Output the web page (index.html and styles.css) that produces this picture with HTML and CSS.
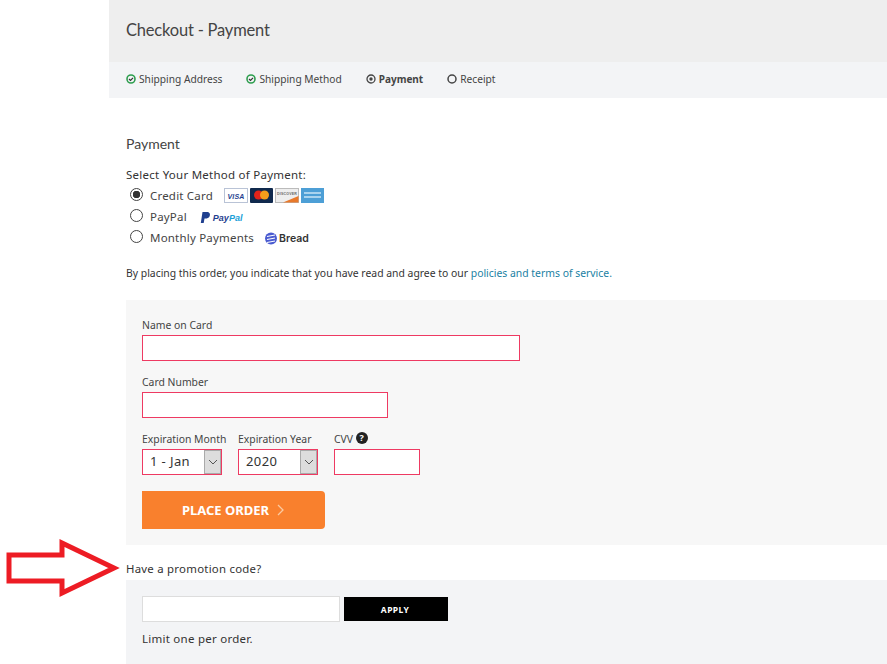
FILE: index.html
```html
<!DOCTYPE html>
<html lang="en">
<head>
  <meta charset="UTF-8" />
  <title>Checkout - Payment</title>
  <link rel="stylesheet" href="styles.css">
</head>
<body>
  <svg class="callout-arrow" width="122" height="60" viewBox="0 0 122 60">
    <path d="M9 17H62V5L114 30L62 55V43H9Z" fill="none" stroke="#ed1c24" stroke-width="5" stroke-linejoin="miter"/>
  </svg>

  <div class="page">
    <div class="header"><h1>Checkout - Payment</h1></div>

    <div class="steps">
      <div class="step step-done">
        <svg width="10" height="10" viewBox="0 0 10 10"><circle cx="5" cy="5" r="4" fill="none" stroke="#2e9e4f" stroke-width="1.600"/><path d="M3 5l1.500 1.500L7 3.800" fill="none" stroke="#333" stroke-width="1.200"/></svg>
        Shipping Address
      </div>
      <div class="step step-done">
        <svg width="10" height="10" viewBox="0 0 10 10"><circle cx="5" cy="5" r="4" fill="none" stroke="#2e9e4f" stroke-width="1.600"/><path d="M3 5l1.500 1.500L7 3.800" fill="none" stroke="#333" stroke-width="1.200"/></svg>
        Shipping Method
      </div>
      <div class="step step-current">
        <svg width="10" height="10" viewBox="0 0 10 10"><circle cx="5" cy="5" r="4" fill="none" stroke="#444" stroke-width="1.300"/><circle cx="5" cy="5" r="1.700" fill="#444"/></svg>
        Payment
      </div>
      <div class="step">
        <svg width="10" height="10" viewBox="0 0 10 10"><circle cx="5" cy="5" r="4" fill="none" stroke="#444" stroke-width="1.500"/></svg>
        Receipt
      </div>
    </div>

    <div class="content">
      <h2>Payment</h2>
      <div class="method-title">Select Your Method of Payment:</div>

      <div class="methods">
        <div class="method">
          <span class="radio radio-on"></span>
          <span class="method-name">Credit Card</span>
          <span class="cards">
            <svg width="24" height="15" viewBox="0 0 24 15"><rect x=".5" y=".5" width="23" height="14" fill="#fff" stroke="#b9c3d6"/><text x="12" y="11" class="visa">VISA</text></svg>
            <svg width="23" height="15" viewBox="0 0 23 15"><rect width="23" height="15" rx="1" fill="#10294d"/><circle cx="8.500" cy="7" r="4.500" fill="#e2231a"/><circle cx="14.500" cy="7" r="4.500" fill="#f79e1b"/></svg>
            <svg width="24" height="15" viewBox="0 0 24 15"><rect x=".5" y=".5" width="23" height="14" fill="#eee" stroke="#bbb"/><path d="M8 14.500L23.500 8V14.500Z" fill="#e8792b"/><text x="12" y="7" class="discover">DISCOVER</text></svg>
            <svg width="23" height="15" viewBox="0 0 23 15"><rect width="23" height="15" fill="#4d9fd6"/><rect x="3" y="4" width="17" height="2" fill="#a9d3ee"/><rect x="3" y="8" width="17" height="2" fill="#a9d3ee"/></svg>
          </span>
        </div>
        <div class="method">
          <span class="radio"></span>
          <span class="method-name">PayPal</span>
          <span class="paypal">
            <svg width="11" height="12" viewBox="0 0 11 12"><path d="M2.500 0H7C10 0 10.500 2.500 9.500 4.500C8.700 6 7.200 6.500 5.500 6.500H4.500L3.700 11H.8Z" fill="#1f3f8f"/></svg>
            <span class="paypal-text"><b>Pay</b><i>Pal</i></span>
          </span>
        </div>
        <div class="method">
          <span class="radio"></span>
          <span class="method-name">Monthly Payments</span>
          <span class="bread">
            <svg width="12" height="13" viewBox="0 0 12 13"><circle cx="6" cy="6.500" r="6" fill="#4a5bd0"/><path d="M2 4.500L10 3M2 7.500L10 6M2 10.500L10 9" stroke="#fff" stroke-width="1.100"/></svg>
            Bread
          </span>
        </div>
      </div>

      <p class="terms">By placing this order, you indicate that you have read and agree to our <a href="#">policies and terms of service.</a></p>

      <div class="card-panel">
        <div class="field">
          <label>Name on Card</label>
          <input type="text" class="input input-name">
        </div>
        <div class="field">
          <label>Card Number</label>
          <input type="text" class="input input-number">
        </div>
        <div class="field-row">
          <div class="field-month">
            <label>Expiration Month</label>
            <div class="select select-month"><span class="select-value">1 - Jan</span><span class="select-btn"><svg width="10" height="6" viewBox="0 0 10 6"><path d="M1 1l4 4 4-4" fill="none" stroke="#555" stroke-width="1"/></svg></span></div>
          </div>
          <div class="field-year">
            <label>Expiration Year</label>
            <div class="select select-year"><span class="select-value">2020</span><span class="select-btn"><svg width="10" height="6" viewBox="0 0 10 6"><path d="M1 1l4 4 4-4" fill="none" stroke="#555" stroke-width="1"/></svg></span></div>
          </div>
          <div class="field-cvv">
            <label class="label-cvv">CVV <span class="help">?</span></label>
            <input type="text" class="input input-cvv">
          </div>
        </div>
        <button class="place-order">PLACE ORDER
          <svg width="8" height="12" viewBox="0 0 8 12"><path d="M1 1l5 5-5 5" fill="none" stroke="#fbc9a0" stroke-width="1.300"/></svg>
        </button>
      </div>

      <div class="promo-title">Have a promotion code?</div>
      <div class="promo-panel">
        <div class="promo-row">
          <input type="text" class="promo-input">
          <button class="apply">APPLY</button>
        </div>
        <div class="promo-note">Limit one per order.</div>
      </div>
    </div>
  </div>
</body>
</html>
```

FILE: styles.css
```css
* {
  box-sizing: border-box;
}

html, body {
  height: 664px;
  overflow: hidden;
}

body {
  margin: 0;
  padding: 0;
  background-color: #fff;
  color: #333;
  font-family: 'Noto Sans', 'Noto Sans CJK KR', sans-serif;
  font-size: 11px;
}

.callout-arrow {
  position: absolute;
  left: 0;
  top: 538px;
}

.page {
  margin-left: 109px;
}

.header {
  height: 62px;
  background-color: #eee;
  padding: 19px 17px 0;
}

.header h1 {
  margin: 0;
  font-family: 'Lato', sans-serif;
  font-size: 16.500px;
  line-height: 22px;
  font-weight: 400;
  letter-spacing: -0.2px;
  color: #444;
}

.steps {
  height: 36px;
  background-color: #f3f4f6;
  padding: 0 0 2px 17px;
  display: flex;
  align-items: center;
}

.step {
  display: flex;
  align-items: center;
  gap: 3px;
  color: #444;
  font-size: 10.200px;
  margin-right: 24px;
  white-space: nowrap;
}

.step-current {
  font-weight: 700;
  font-size: 10px;
}

.content {
  padding: 0 0 0 17px;
}

h2 {
  margin: 37px 0 0;
  font-family: 'Lato', sans-serif;
  font-size: 14px;
  line-height: 18px;
  font-weight: 400;
  color: #444;
}

.method-title {
  margin-top: 14px;
  font-size: 11.500px;
  line-height: 16px;
  letter-spacing: 0.25px;
}

.methods {
  margin-top: 2px;
}

.method {
  display: flex;
  align-items: center;
  height: 21px;
  padding-left: 4px;
  font-size: 11.500px;
  letter-spacing: 0.2px;
  color: #444;
}

.radio {
  width: 13px;
  height: 13px;
  margin: 0 7px 2px 0;
  border: 1px solid #444;
  border-radius: 50%;
  background-color: #fff;
  flex: none;
}

.radio-on {
  background: radial-gradient(circle, #333 0 3.500px, #fff 4px);
}

.cards {
  display: flex;
  gap: 2px;
  margin-left: 11px;
}

.visa {
  font: italic 700 7px 'Liberation Sans', sans-serif;
  fill: #1f3f8f;
  text-anchor: middle;
}

.discover {
  font: 700 3.500px 'Liberation Sans', sans-serif;
  fill: #666;
  text-anchor: middle;
}

.paypal {
  display: flex;
  align-items: center;
  gap: 2px;
  margin-left: 13px;
  padding-top: 2px;
}

.paypal-text {
  font: italic 700 9px 'Liberation Sans', sans-serif;
  letter-spacing: 0;
}

.paypal-text b {
  color: #1f3f8f;
}

.paypal-text i {
  color: #1d9fd8;
}

.bread {
  display: flex;
  align-items: center;
  gap: 2px;
  margin-left: 11px;
  padding-top: 2px;
  font: 600 10.500px 'Inter', sans-serif;
  letter-spacing: 0;
  color: #333;
}

.terms {
  margin: 18px 0 0;
  font-size: 10.400px;
  line-height: 14px;
}

.terms a {
  color: #1a7fa3;
  text-decoration: none;
}

.card-panel {
  margin-top: 20px;
  height: 245px;
  background-color: #f7f7f7;
  padding: 18px 16px 0;
}

label {
  display: block;
  font-size: 10.400px;
  line-height: 14px;
  color: #444;
}

.label-cvv {
  height: 14px;
}

.field {
  height: 57px;
}

.input {
  display: block;
  height: 26px;
  margin-top: 3px;
  background-color: #fff;
  border: 1px solid #ee3a62;
}

.input-name {
  width: 378px;
}

.input-number {
  width: 246px;
}

.field-row {
  display: flex;
}

.field-month,
.field-year {
  width: 96px;
}

.input-cvv {
  width: 86px;
}

.help {
  display: inline-block;
  width: 12px;
  height: 12px;
  border-radius: 50%;
  background-color: #222;
  color: #fff;
  font-size: 9px;
  font-weight: 700;
  line-height: 12px;
  text-align: center;
  vertical-align: 2px;
}

.select {
  display: flex;
  justify-content: space-between;
  align-items: center;
  width: 80px;
  height: 26px;
  margin-top: 3px;
  padding-left: 7px;
  background-color: #fff;
  border: 1px solid #ee3a62;
  font-size: 13px;
  letter-spacing: 0.4px;
  color: #333;
}

.select-value {
  padding-bottom: 2px;
}

.select-btn {
  width: 17px;
  height: 24px;
  background-color: #ddd;
  border: 1px solid #aaa;
  display: flex;
  align-items: center;
  justify-content: center;
}

.place-order {
  display: flex;
  align-items: center;
  justify-content: center;
  gap: 8px;
  width: 183px;
  height: 38px;
  margin-top: 16px;
  background-color: #f9802d;
  color: #fff;
  border: none;
  border-radius: 0 4px 4px 0;
  font-family: 'Noto Sans', sans-serif;
  font-size: 13px;
  font-weight: 700;
}

.promo-title {
  height: 35px;
  padding-top: 16px;
  font-size: 11.400px;
  line-height: 16px;
  letter-spacing: 0.25px;
}

.promo-panel {
  height: 84px;
  background-color: #f3f4f6;
  padding: 16px 16px 0;
}

.promo-row {
  display: flex;
  align-items: center;
  gap: 4px;
}

.promo-input {
  width: 198px;
  height: 26px;
  background-color: #fff;
  border: 1px solid #ddd;
}

.apply {
  width: 104px;
  height: 24px;
  padding: 0 8px 0 6px;
  background-color: #000;
  color: #fff;
  border: none;
  font-family: 'Noto Sans', sans-serif;
  font-size: 8.500px;
  font-weight: 700;
  letter-spacing: 0.4px;
}

.promo-note {
  margin-top: 9px;
  font-size: 11.500px;
  line-height: 16px;
  letter-spacing: 0.25px;
}
```
